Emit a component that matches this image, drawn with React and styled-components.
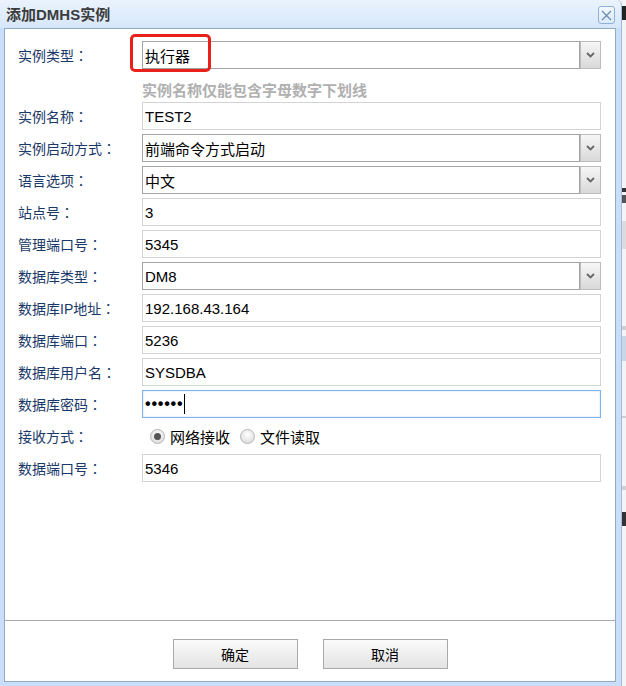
import React from "react";
import styled, { createGlobalStyle } from "styled-components";

const Global = createGlobalStyle`
  html, body { margin: 0; padding: 0; }
  body { font-family: "Liberation Sans", "Noto Sans CJK SC", sans-serif; }
  #root { width: 626px; height: 686px; overflow: hidden; }
`;

const Page = styled.div`
  display: flex;
  width: 626px;
  height: 686px;
  background: #f2f2f2;
`;

const Dialog = styled.div`
  box-sizing: border-box;
  width: 622px;
  height: 686px;
  flex: none;
  display: flex;
  flex-direction: column;
  background: #c9dff9;
  border-right: 1px solid #9ebde3;
  border-top-right-radius: 5px;
`;

const TitleBar = styled.div`
  height: 28px;
  flex: none;
  display: flex;
  align-items: center;
  justify-content: space-between;
  padding: 0 6px 0 6px;
  background: linear-gradient(#eaf3fd, #d6e7fa);
  border-top-right-radius: 5px;
`;

const Title = styled.div`
  font-size: 15px;
  font-weight: bold;
  color: #3c3c3c;
  line-height: 18px;
  margin-top: 1px;
`;

const CloseBtn = styled.div`
  box-sizing: border-box;
  width: 17px;
  height: 18px;
  margin-top: 2px;
  border: 1px solid #8eb0d9;
  border-radius: 3px;
  background: linear-gradient(#f3f8fe, #dbe9f9);
  display: flex;
  align-items: center;
  justify-content: center;
`;

const Panel = styled.div`
  flex: 1;
  margin: 0 5px 4px 4px;
  border: 1px solid #93aac6;
  background: #fff;
  display: flex;
  flex-direction: column;
`;

const Form = styled.div`
  flex: 1;
  display: flex;
  flex-direction: column;
  gap: 4px;
  padding: 12px 0 0 13px;
`;

const Row = styled.div`
  display: grid;
  grid-template-columns: 124px 459px;
  align-items: center;
  height: ${(p) => (p.$h ? p.$h : 28)}px;
`;

const Label = styled.div`
  font-size: 14px;
  color: #1a3868;
  line-height: 16px;
  white-space: nowrap;
`;

const Colon = styled.span`
  font-family: "Noto Sans CJK TC", sans-serif;
`;

const Hint = styled.div`
  align-self: start;
  padding-top: 10px;
  font-size: 15px;
  font-weight: bold;
  color: #b0b0b0;
  line-height: 16px;
  white-space: nowrap;
`;

const TextBox = styled.div`
  box-sizing: border-box;
  height: 28px;
  display: flex;
  align-items: center;
  padding-left: 2px;
  border: 1px solid ${(p) => (p.$focus ? "#7fb0e6" : p.$dark ? "#a4a4a4" : "#d3d3d3")};
  box-shadow: ${(p) => (p.$focus ? "inset 0 0 2px #b9d6f5" : "none")};
  font-size: 15px;
  color: #000;
  background: #fff;
  white-space: nowrap;
  flex: 1;
  min-width: 0;
`;

const SelectWrap = styled.div`
  position: relative;
  display: flex;
  height: 28px;
`;

const DropBtn = styled.div`
  box-sizing: border-box;
  width: 21px;
  height: 28px;
  flex: none;
  border: 1px solid #bdbdbd;
  background: linear-gradient(#f6f6f6, #d9d9d9);
  display: flex;
  align-items: center;
  justify-content: center;
`;

const Marker = styled.div`
  position: absolute;
  left: -12px;
  top: -7px;
  width: 81px;
  height: 38px;
  box-sizing: border-box;
  border: 3px solid #e8221b;
  border-radius: 5px;
  pointer-events: none;
`;

const Dots = styled.span`
  font-family: "Liberation Sans", sans-serif;
  font-size: 16px;
  font-weight: bold;
  letter-spacing: 0.8px;
  line-height: 16px;
`;

const Caret = styled.span`
  display: inline-block;
  width: 1px;
  height: 20px;
  background: #000;
  margin-left: 1px;
`;

const RadioGroup = styled.div`
  display: flex;
  align-items: center;
  padding-left: 8px;
`;

const RadioItem = styled.label`
  display: flex;
  align-items: center;
  gap: 5px;
  margin-right: 10px;
  font-size: 15px;
  color: #000;
`;

const RadioCircle = styled.span`
  box-sizing: border-box;
  width: 15px;
  height: 15px;
  border-radius: 50%;
  border: 1px solid #b5b5b5;
  background: radial-gradient(circle at 50% 35%, #ffffff, #d6d6d6);
  display: flex;
  align-items: center;
  justify-content: center;
  &::after {
    content: "";
    width: 7px;
    height: 7px;
    border-radius: 50%;
    background: ${(p) => (p.$on ? "#555" : "transparent")};
  }
`;

const Footer = styled.div`
  flex: none;
  border-top: 1px solid #a9a9a9;
  display: flex;
  justify-content: center;
  gap: 25px;
  padding-top: 18px;
  height: 42px;
`;

const Button = styled.button`
  width: 125px;
  height: 30px;
  border: 1px solid #a9a9a9;
  background: linear-gradient(#fbfbfb, #e3e3e3);
  font-family: "Liberation Sans", "Noto Sans CJK SC", sans-serif;
  font-size: 14px;
  color: #000;
  padding: 0;
`;

const Backdrop = styled.div`
  flex: 1;
  display: flex;
  flex-direction: column;
  background: #f4f4f4;
`;

const Strip = styled.div`
  height: ${(p) => p.$h}px;
  background: ${(p) => p.$c || "transparent"};
  flex: none;
`;

const Chevron = () => (
  <svg width="9" height="6" viewBox="0 0 9 6">
    <path d="M1 1 L4.5 4.5 L8 1" stroke="#666" strokeWidth="1.8" fill="none" />
  </svg>
);

const CloseIcon = () => (
  <svg width="11" height="11" viewBox="0 0 11 11">
    <path d="M1 1 L10 10 M10 1 L1 10" stroke="#6b8cb6" strokeWidth="1.3" fill="none" />
  </svg>
);

const Select = ({ value, marked }) => (
  <SelectWrap>
    <TextBox $dark>{value}</TextBox>
    <DropBtn>
      <Chevron />
    </DropBtn>
    {marked && <Marker />}
  </SelectWrap>
);

const FieldLabel = ({ children }) => (
  <Label>
    {children}
    <Colon>：</Colon>
  </Label>
);

export default function App() {
  return (
    <>
      <Global />
      <Page>
        <Dialog>
          <TitleBar>
            <Title>添加DMHS实例</Title>
            <CloseBtn>
              <CloseIcon />
            </CloseBtn>
          </TitleBar>
          <Panel>
            <Form>
              <Row>
                <FieldLabel>实例类型</FieldLabel>
                <Select value="执行器" marked />
              </Row>
              <Row $h={25}>
                <span />
                <Hint>实例名称仅能包含字母数字下划线</Hint>
              </Row>
              <Row>
                <FieldLabel>实例名称</FieldLabel>
                <TextBox>TEST2</TextBox>
              </Row>
              <Row>
                <FieldLabel>实例启动方式</FieldLabel>
                <Select value="前端命令方式启动" />
              </Row>
              <Row>
                <FieldLabel>语言选项</FieldLabel>
                <Select value="中文" />
              </Row>
              <Row>
                <FieldLabel>站点号</FieldLabel>
                <TextBox>3</TextBox>
              </Row>
              <Row>
                <FieldLabel>管理端口号</FieldLabel>
                <TextBox>5345</TextBox>
              </Row>
              <Row>
                <FieldLabel>数据库类型</FieldLabel>
                <Select value="DM8" />
              </Row>
              <Row>
                <FieldLabel>数据库IP地址</FieldLabel>
                <TextBox>192.168.43.164</TextBox>
              </Row>
              <Row>
                <FieldLabel>数据库端口</FieldLabel>
                <TextBox>5236</TextBox>
              </Row>
              <Row>
                <FieldLabel>数据库用户名</FieldLabel>
                <TextBox>SYSDBA</TextBox>
              </Row>
              <Row>
                <FieldLabel>数据库密码</FieldLabel>
                <TextBox $focus>
                  <Dots>••••••</Dots>
                  <Caret />
                </TextBox>
              </Row>
              <Row>
                <FieldLabel>接收方式</FieldLabel>
                <RadioGroup>
                  <RadioItem>
                    <RadioCircle $on />
                    网络接收
                  </RadioItem>
                  <RadioItem>
                    <RadioCircle />
                    文件读取
                  </RadioItem>
                </RadioGroup>
              </Row>
              <Row>
                <FieldLabel>数据端口号</FieldLabel>
                <TextBox>5346</TextBox>
              </Row>
            </Form>
            <Footer>
              <Button>确定</Button>
              <Button>取消</Button>
            </Footer>
          </Panel>
        </Dialog>
        <Backdrop>
          <Strip $h={6} />
          <Strip $h={14} $c="#222" />
          <Strip $h={168} />
          <Strip $h={4} $c="#333" />
          <Strip $h={3} />
          <Strip $h={8} $c="#555" />
          <Strip $h={18} />
          <Strip $h={28} $c="#dcdcdc" />
          <Strip $h={77} />
          <Strip $h={4} $c="#cfcfcf" />
          <Strip $h={6} />
          <Strip $h={25} $c="#c9d6e6" />
          <Strip $h={55} />
          <Strip $h={2} $c="#cfcfcf" />
          <Strip $h={68} />
          <Strip $h={4} $c="#d0d0d0" />
          <Strip $h={22} />
          <Strip $h={14} $c="#333" />
        </Backdrop>
      </Page>
    </>
  );
}
